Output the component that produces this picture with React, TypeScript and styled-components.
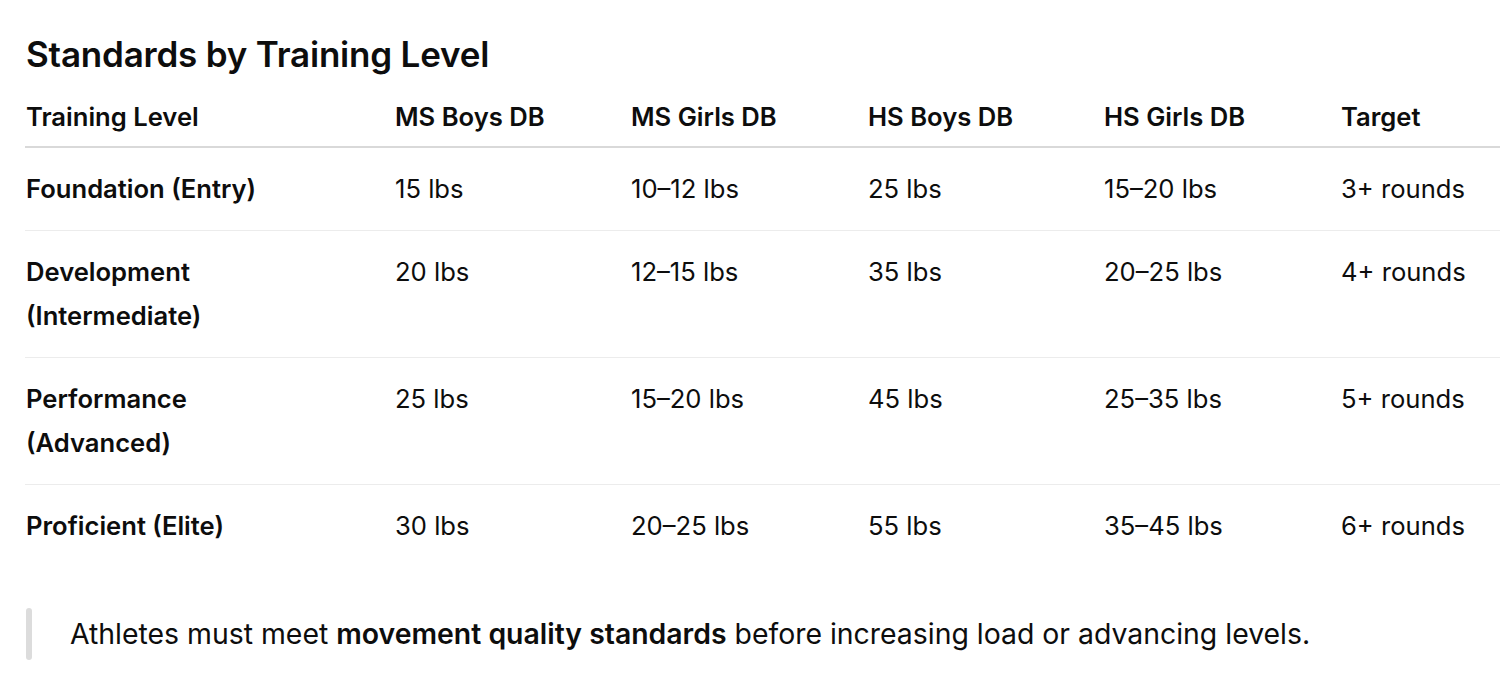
import React from "react";
import styled, { createGlobalStyle } from "styled-components";

const Global = createGlobalStyle`
  html, body { margin: 0; padding: 0; background: #ffffff; overflow: hidden; }
  body { font-family: Inter, "Noto Sans", sans-serif; color: #0d0d0d; }
`;

const Page = styled.div`
  padding: 32px 0 0 25px;
  width: 1475px;
`;

const Heading = styled.h3`
  margin: 0 0 12px 1px;
  font-size: 35px;
  line-height: 44px;
  font-weight: 600;
  letter-spacing: -0.2px;
`;

const Table = styled.table`
  width: 1475px;
  table-layout: fixed;
  border-collapse: collapse;
  font-size: 25.6px;
  line-height: 44px;
`;

const HeadCell = styled.th`
  text-align: left;
  font-weight: 600;
  padding: 7px 60px 7px 1px;
  border-bottom: 2px solid #d9d9d9;
  vertical-align: top;
  white-space: nowrap;
`;

const Row = styled.tr`
  border-bottom: 1px solid #ececec;
  &:last-child { border-bottom: none; }
`;

const Cell = styled.td<{ $strong?: boolean }>`
  padding: 19px 60px 19px 1px;
  vertical-align: top;
  font-weight: ${(p) => (p.$strong ? 600 : 400)};
  white-space: ${(p) => (p.$strong ? "normal" : "nowrap")};
`;

const Quote = styled.blockquote`
  margin: 41px 0 0 1px;
  display: flex;
  align-items: center;
  gap: 38px;
`;

const QuoteBar = styled.span`
  flex: none;
  width: 6px;
  height: 52px;
  border-radius: 3px;
  background: #dcdcdc;
`;

const QuoteText = styled.p`
  margin: 0;
  font-size: 28.4px;
  line-height: 44px;
  font-weight: 400;
  white-space: nowrap;
  b { font-weight: 600; }
`;

const widths = [369, 236, 237, 236, 237, 160];
const headers = ["Training Level", "MS Boys DB", "MS Girls DB", "HS Boys DB", "HS Girls DB", "Target"];
const rows: string[][] = [
  ["Foundation (Entry)", "15 lbs", "10–12 lbs", "25 lbs", "15–20 lbs", "3+ rounds"],
  ["Development (Intermediate)", "20 lbs", "12–15 lbs", "35 lbs", "20–25 lbs", "4+ rounds"],
  ["Performance (Advanced)", "25 lbs", "15–20 lbs", "45 lbs", "25–35 lbs", "5+ rounds"],
  ["Proficient (Elite)", "30 lbs", "20–25 lbs", "55 lbs", "35–45 lbs", "6+ rounds"],
];

export default function App() {
  return (
    <Page>
      <Global />
      <Heading>Standards by Training Level</Heading>
      <Table>
        <colgroup>
          {widths.map((w, i) => (
            <col key={i} style={{ width: w }} />
          ))}
        </colgroup>
        <thead>
          <tr>
            {headers.map((h) => (
              <HeadCell key={h}>{h}</HeadCell>
            ))}
          </tr>
        </thead>
        <tbody>
          {rows.map((r) => (
            <Row key={r[0]}>
              {r.map((c, i) => (
                <Cell key={i} $strong={i === 0}>
                  {c}
                </Cell>
              ))}
            </Row>
          ))}
        </tbody>
      </Table>
      <Quote>
        <QuoteBar />
        <QuoteText>
          Athletes must meet <b>movement quality standards</b> before increasing load or advancing levels.
        </QuoteText>
      </Quote>
    </Page>
  );
}
